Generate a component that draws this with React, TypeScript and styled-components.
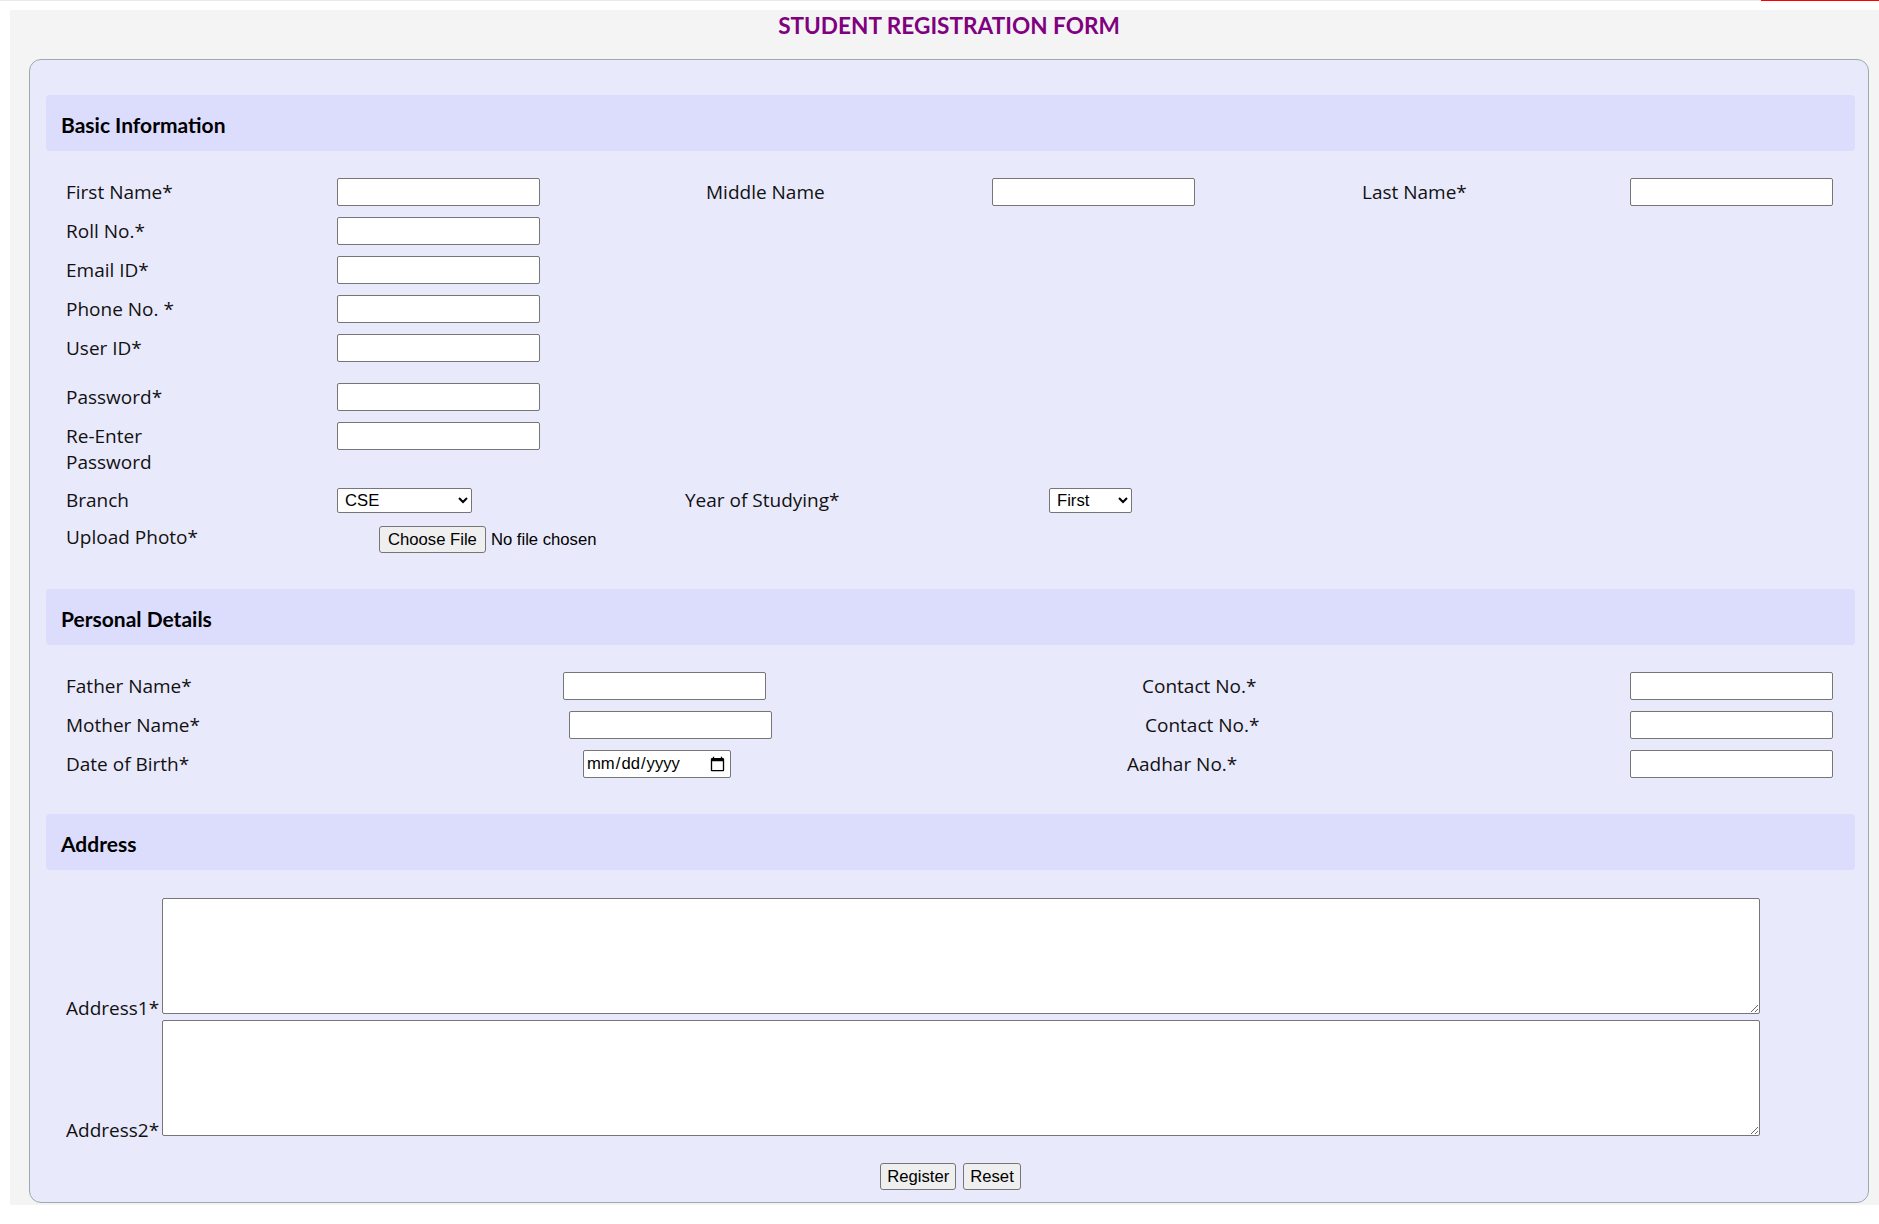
import { FunctionComponent } from "react";
import styled, { createGlobalStyle } from "styled-components";

const GlobalStyle = createGlobalStyle`
  html, body {
    margin: 0;
    padding: 0;
    background: #ffffff;
  }
  * {
    box-sizing: border-box;
  }
`;

const BASIC_COLS = "271px 369px 286px 370px 268px 203px";
const PERSONAL_COLS = "497px 564px 503px 203px";

const App: FunctionComponent = () => {
  return (
    <>
      <GlobalStyle />
      <Page>
        <TopStrip>
          <StripTrack />
          <StripProgress />
        </TopStrip>
        <Sheet>
          <Title>STUDENT REGISTRATION FORM</Title>
          <Panel>
            <SectionBar>Basic Information</SectionBar>
            <SectionBody>
              <Row $cols={BASIC_COLS}>
                <Label>First Name*</Label>
                <TextInput type="text" />
                <Label>Middle Name</Label>
                <TextInput type="text" />
                <Label>Last Name*</Label>
                <TextInput type="text" />
              </Row>
              <Row $cols={BASIC_COLS}>
                <Label>Roll No.*</Label>
                <TextInput type="text" />
              </Row>
              <Row $cols={BASIC_COLS}>
                <Label>Email ID*</Label>
                <TextInput type="text" />
              </Row>
              <Row $cols={BASIC_COLS}>
                <Label>Phone No. *</Label>
                <TextInput type="text" />
              </Row>
              <Row $cols={BASIC_COLS} $extra={10}>
                <Label>User ID*</Label>
                <TextInput type="text" />
              </Row>
              <Row $cols={BASIC_COLS}>
                <Label>Password*</Label>
                <TextInput type="password" />
              </Row>
              <Row $cols={BASIC_COLS}>
                <Label>
                  Re-Enter
                  <br />
                  Password
                </Label>
                <TextInput type="password" />
              </Row>
              <Row $cols={BASIC_COLS}>
                <Label>Branch</Label>
                <Select $width={135} defaultValue="CSE">
                  <option>CSE</option>
                  <option>ECE</option>
                  <option>EEE</option>
                  <option>MECH</option>
                  <option>CIVIL</option>
                </Select>
                <Label $offset={-21}>Year of Studying*</Label>
                <Select $width={83} $offset={57} defaultValue="First">
                  <option>First</option>
                  <option>Second</option>
                  <option>Third</option>
                  <option>Fourth</option>
                </Select>
              </Row>
              <Row $cols={BASIC_COLS}>
                <Label $raise={2}>Upload Photo*</Label>
                <FileInput type="file" $offset={42} />
              </Row>
            </SectionBody>

            <SectionBar>Personal Details</SectionBar>
            <SectionBody>
              <Row $cols={PERSONAL_COLS}>
                <Label>Father Name*</Label>
                <TextInput type="text" />
                <Label $offset={15}>Contact No.*</Label>
                <TextInput type="text" />
              </Row>
              <Row $cols={PERSONAL_COLS}>
                <Label>Mother Name*</Label>
                <TextInput type="text" $offset={6} />
                <Label $offset={18}>Contact No.*</Label>
                <TextInput type="text" />
              </Row>
              <Row $cols={PERSONAL_COLS}>
                <Label>Date of Birth*</Label>
                <DateInput type="date" $offset={20} />
                <Label>Aadhar No.*</Label>
                <TextInput type="text" />
              </Row>
            </SectionBody>

            <SectionBar>Address</SectionBar>
            <AddressBody>
              <AddressRow>
                <AddressLabel>Address1*</AddressLabel>
                <TextArea />
              </AddressRow>
              <AddressRow>
                <AddressLabel>Address2*</AddressLabel>
                <TextArea />
              </AddressRow>
            </AddressBody>

            <Actions>
              <Button type="submit">Register</Button>
              <Button type="reset">Reset</Button>
            </Actions>
          </Panel>
        </Sheet>
      </Page>
    </>
  );
};

export default App;

const Page = styled.div`
  position: relative;
  padding: 10px 0 17px 10px;
`;

const TopStrip = styled.div`
  position: absolute;
  top: 0;
  left: 0;
  right: 0;
  height: 1px;
  display: flex;
`;

const StripTrack = styled.div`
  flex: 1;
  background: #e9e9e9;
`;

const StripProgress = styled.div`
  width: 118px;
  background: #ff0000;
`;

const Sheet = styled.div`
  background: #f4f4f4;
  padding: 0 10px 2px 19px;
`;

const Title = styled.h1`
  margin: 0 0 19px;
  height: 30px;
  line-height: 32px;
  text-align: center;
  font-family: Lato, "Open Sans", sans-serif;
  font-weight: 700;
  font-size: 22.6px;
  color: #800080;
`;

const Panel = styled.form`
  background: #e9e9fc;
  border: 1px solid #9aabab;
  border-radius: 12px;
  padding: 35px 13px 12px 16px;
`;

const SectionBar = styled.div`
  height: 56px;
  display: flex;
  align-items: center;
  padding: 2px 0 0 15px;
  background: #dcdcfc;
  border-radius: 4px;
  font-family: Lato, "Open Sans", sans-serif;
  font-weight: 700;
  font-size: 21px;
  color: #000000;
`;

const SectionBody = styled.div`
  display: flex;
  flex-direction: column;
  gap: 11px;
  padding: 27px 0 36px 20px;
`;

const Row = styled.div<{ $cols: string; $extra?: number }>`
  display: grid;
  grid-template-columns: ${({ $cols }) => $cols};
  align-items: start;
  min-height: 28px;
  margin-bottom: ${({ $extra }) => $extra || 0}px;
`;

const Label = styled.label<{ $offset?: number; $raise?: number }>`
  padding-top: 1px;
  margin: ${({ $raise }) => -($raise || 0)}px 0 0 ${({ $offset }) => $offset || 0}px;
  font-family: "Open Sans", sans-serif;
  font-size: 19px;
  line-height: 26px;
  color: #111111;
  white-space: nowrap;
`;

const controlFont = `
  font-family: "Liberation Sans", Arial, sans-serif;
  font-size: 16.67px;
  color: #000000;
`;

const TextInput = styled.input<{ $offset?: number }>`
  width: 203px;
  height: 28px;
  padding: 1px 3px;
  margin: 0 0 0 ${({ $offset }) => $offset || 0}px;
  border: 1px solid #767676;
  border-radius: 2px;
  background: #ffffff;
  ${controlFont}
`;

const Select = styled.select<{ $width: number; $offset?: number }>`
  width: ${({ $width }) => $width}px;
  height: 25px;
  align-self: center;
  margin: 0 0 0 ${({ $offset }) => $offset || 0}px;
  padding: 0 0 0 3px;
  border: 1px solid #767676;
  border-radius: 2px;
  background: #ffffff;
  ${controlFont}
`;

const FileInput = styled.input<{ $offset?: number }>`
  height: 27px;
  margin: 1px 0 0 ${({ $offset }) => $offset || 0}px;
  ${controlFont}

  &::file-selector-button {
    height: 27px;
    padding: 0 8px;
    margin-right: 5px;
    background: #efefef;
    border: 1px solid #767676;
    border-radius: 3px;
    ${controlFont}
  }
`;

const DateInput = styled.input<{ $offset?: number }>`
  width: 148px;
  height: 28px;
  padding: 0 2px;
  margin: 0 0 0 ${({ $offset }) => $offset || 0}px;
  border: 1px solid #767676;
  border-radius: 2px;
  background: #ffffff;
  ${controlFont}
`;

const AddressBody = styled.div`
  display: flex;
  flex-direction: column;
  gap: 6px;
  padding: 28px 0 0 20px;
`;

const AddressRow = styled.div`
  display: flex;
  align-items: flex-end;
`;

const AddressLabel = styled.label`
  width: 96px;
  margin-bottom: -7px;
  font-family: "Open Sans", sans-serif;
  font-size: 19px;
  line-height: 26.5px;
  color: #111111;
  white-space: nowrap;
`;

const TextArea = styled.textarea`
  width: 1598px;
  height: 116px;
  margin: 0;
  border: 1px solid #767676;
  border-radius: 2px;
  background: #ffffff;
  ${controlFont}
`;

const Actions = styled.div`
  display: flex;
  justify-content: center;
  gap: 7px;
  padding-top: 27px;
`;

const Button = styled.button`
  height: 27px;
  padding: 0 6px;
  background: #efefef;
  border: 1px solid #767676;
  border-radius: 3px;
  ${controlFont}
`;
